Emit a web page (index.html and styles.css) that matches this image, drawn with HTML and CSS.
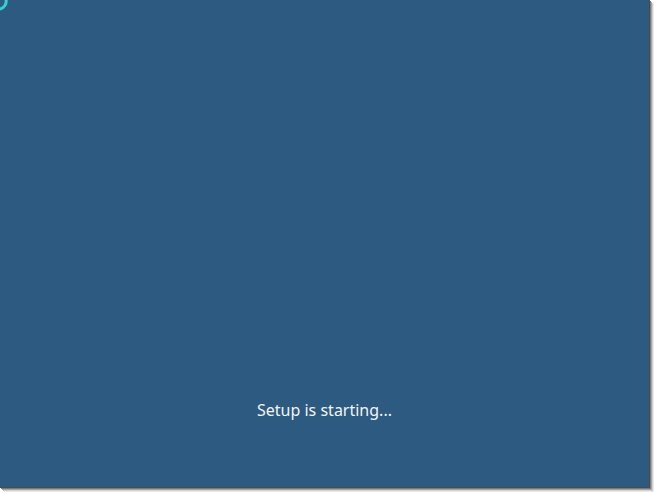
FILE: index.html
```html
<!DOCTYPE html>
<html>
<head>
<meta charset="utf-8">
<link rel="stylesheet" href="styles.css">
</head>
<body>
<div class="screen">
  <svg class="spinner" width="12" height="12" viewBox="0 0 12 12">
    <path d="M0 9 A8 8 0 0 0 6 -0.5" fill="none" stroke="#36d0d0" stroke-width="3" stroke-linecap="round"/>
  </svg>
  <div class="status">Setup is starting...</div>
</div>
</body>
</html>
```
FILE: styles.css
```css
html, body {
  margin: 0;
  padding: 0;
  background: #ffffff;
  width: 654px;
  height: 492px;
  overflow: hidden;
}
.screen {
  position: relative;
  box-sizing: border-box;
  width: 650px;
  height: 488px;
  background: #2c5a80;
  border-right: 1px solid #4a4a4a;
  border-bottom: 1px solid #4a4a4a;
  box-shadow: 1px 1px 0 #7a7a7a, 2px 2px 0 #a5a5a5, 3px 3px 0 #cfcfcf, 4px 4px 0 #ebebeb;
  display: flex;
  flex-direction: column;
  align-items: center;
  padding-top: 399px;
}
.spinner {
  position: absolute;
  left: 0;
  top: 0;
}
.status {
  font-family: "Noto Sans", "Open Sans", sans-serif;
  font-size: 16px;
  line-height: 22px;
  color: #f2f5f8;
}
```
